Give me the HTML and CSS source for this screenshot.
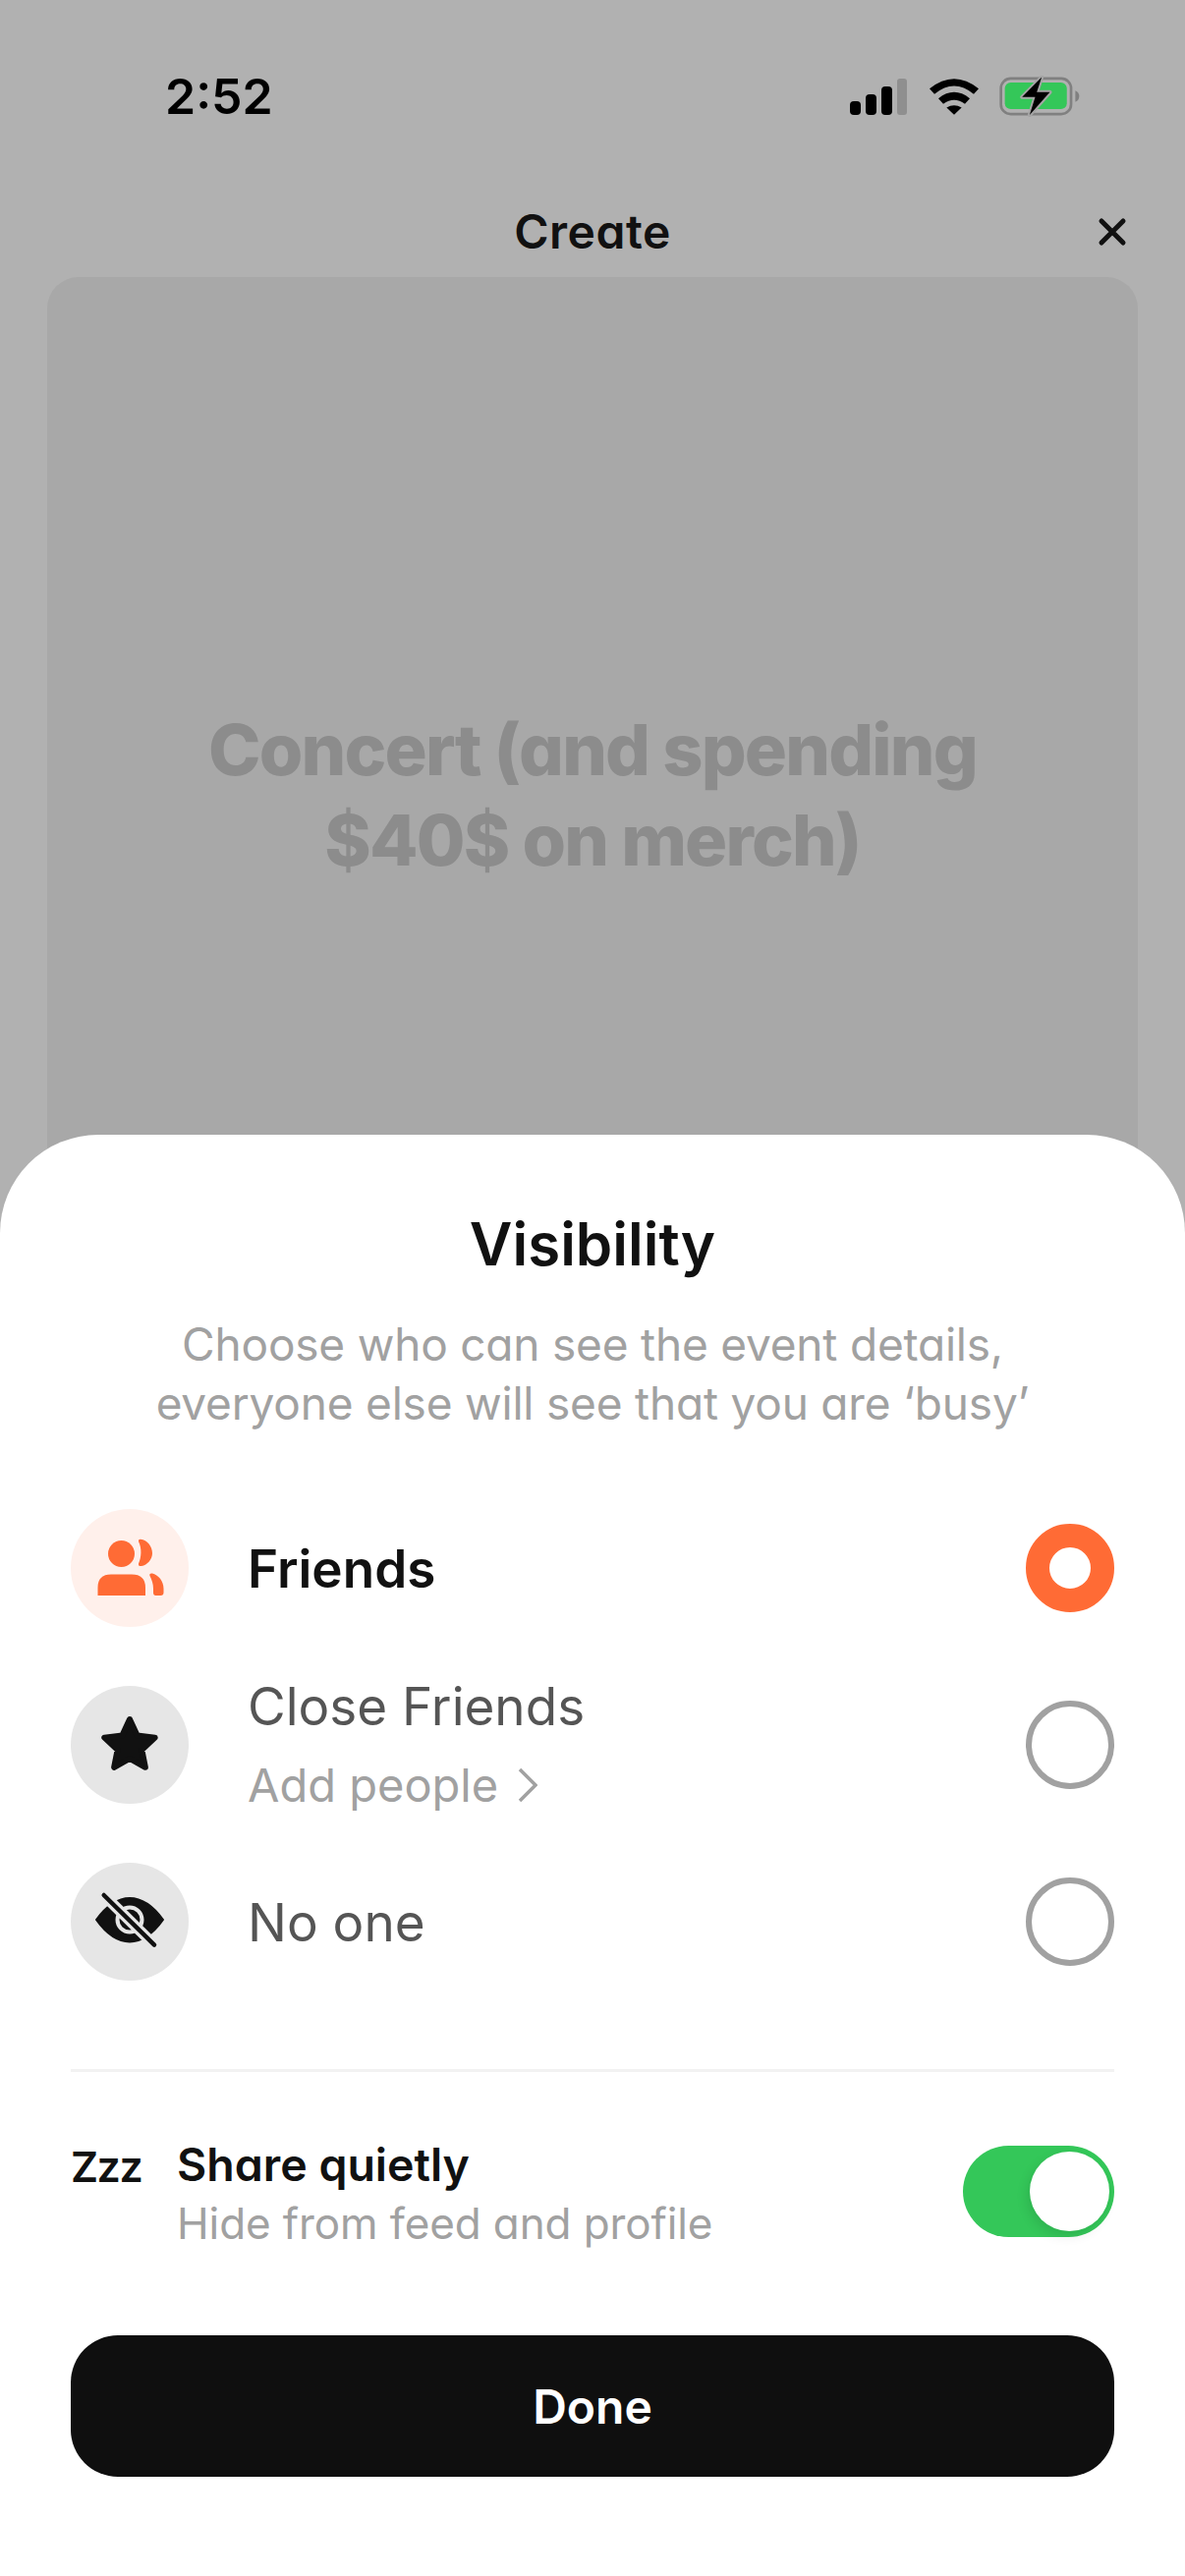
FILE: index.html
```html
<!DOCTYPE html>
<html lang="en">
<head>
    <meta charset="UTF-8">
    <meta name="viewport" content="width=device-width, initial-scale=1.0">
    <title>Visibility</title>
    <link rel="stylesheet" href="styles.css">
</head>
<body>
    <div class="screen">
        <div class="status-bar">
            <span class="status-time">2:52</span>
            <div class="status-icons">
                <svg class="icon-signal" width="58" height="37" viewBox="0 0 58 37">
                    <rect x="0" y="23" width="11" height="14" rx="4" fill="#000"/>
                    <rect x="16" y="16" width="11" height="21" rx="4" fill="#000"/>
                    <rect x="32" y="8" width="11" height="29" rx="4" fill="#000"/>
                    <rect x="48" y="0" width="10" height="37" rx="3" fill="#8f8f8f"/>
                </svg>
                <svg class="icon-wifi" width="50" height="37" viewBox="0 0 150 110">
                    <path d="M0 30 Q75 -30 150 30 L135 47 Q75 -3 15 47Z" fill="#000"/>
                    <path d="M27 60 Q75 22 123 60 L108 77 Q75 52 42 77Z" fill="#000"/>
                    <path d="M52 88 Q75 74 98 88 L75 110Z" fill="#000"/>
                </svg>
                <svg class="icon-battery" width="83" height="42" viewBox="535 50 250 125">
                    <rect x="540" y="58" width="215" height="109" rx="30" fill="none" stroke="#808080" stroke-width="8"/>
                    <rect x="552" y="70" width="190" height="82" rx="18" fill="#34c759"/>
                    <path d="M768 95 Q780 100 780 112 Q780 125 768 130Z" fill="#808080"/>
                    <path d="M665 54 L605 115 L645 115 L628 170 L690 100 L650 100Z" fill="#000" stroke="#a4a4a4" stroke-width="12" paint-order="stroke" stroke-linejoin="round"/>
                </svg>
            </div>
        </div>

        <div class="top-bar">
            <span class="top-title">Create</span>
            <svg class="icon-close" width="30" height="30" viewBox="0 0 30 30">
                <path d="M4 4 L26 26 M26 4 L4 26" stroke="#111" stroke-width="5" stroke-linecap="round"/>
            </svg>
        </div>

        <div class="event-card">
            <p class="event-name">Concert (and spending<br>$40$ on merch)</p>
        </div>

        <div class="sheet">
            <h1 class="sheet-title">Visibility</h1>
            <p class="sheet-text">Choose who can see the event details,<br>everyone else will see that you are ‘busy’</p>

            <div class="options">
                <div class="option">
                    <div class="option-icon option-icon-active">
                        <svg width="90" height="84" viewBox="-3 0 90 84">
                            <circle cx="33.5" cy="27.5" r="13.5" fill="#ff6b35"/>
                            <path d="M9.5 70 V62 Q9.5 48.5 23 48.5 H44 Q58 48.5 58 62 V70Z" fill="#ff6b35"/>
                            <path d="M51 15 Q50.5 12.5 53 12.7 C60 13.5 65 20 65 27 C65 33 60 39 54 40 Q50.5 40.5 51 37.5 C54 31 54.5 22 51 15Z" fill="#ff6b35"/>
                            <path d="M62.5 50 Q61.5 47 65 47.5 C71 49 76.5 55 76.5 63 V67 Q76.5 70 73.5 70 H68.5 Q66 70 66 67 V63 C66 58 64.5 54 62.5 50Z" fill="#ff6b35"/>
                        </svg>
                    </div>
                    <div class="option-text">
                        <span class="option-label option-label-active">Friends</span>
                    </div>
                    <div class="radio radio-active"></div>
                </div>
                <div class="option">
                    <div class="option-icon">
                        <svg width="60" height="60" viewBox="0 0 60 60">
                            <path d="M30 4 L37.64 20.48 L55.68 22.66 L42.36 35.02 L45.87 52.84 L30 44 L14.13 52.84 L17.64 35.02 L4.32 22.66 L22.36 20.48Z" fill="#111" stroke="#111" stroke-width="6" stroke-linejoin="round"/>
                        </svg>
                    </div>
                    <div class="option-text">
                        <span class="option-label">Close Friends</span>
                        <span class="option-sub">Add people
                            <svg class="icon-chevron" width="20" height="36" viewBox="0 0 20 36">
                                <path d="M2 2 L18 18 L2 34" fill="none" stroke="#a1a1a1" stroke-width="3.5"/>
                            </svg>
                        </span>
                    </div>
                    <div class="radio"></div>
                </div>
                <div class="option">
                    <div class="option-icon">
                        <svg width="90" height="84" viewBox="-3 0 90 84">
                            <path d="M8 40 Q24 18 42 18 Q60 18 76 40 Q60 62.5 42 62.5 Q24 62.5 8 40Z" fill="#111" stroke="#111" stroke-width="2" stroke-linejoin="round"/>
                            <circle cx="42" cy="40" r="12.5" fill="#111" stroke="#e6e6e6" stroke-width="4"/>
                            <path d="M15.7 15 L67 65.7" stroke="#e6e6e6" stroke-width="11"/>
                            <path d="M15.7 15 L67 65.7" stroke="#111" stroke-width="4.5" stroke-linecap="round"/>
                        </svg>
                    </div>
                    <div class="option-text">
                        <span class="option-label">No one</span>
                    </div>
                    <div class="radio"></div>
                </div>
            </div>

            <div class="divider"></div>

            <div class="quiet-row">
                <span class="quiet-zzz">Zzz</span>
                <div class="quiet-text">
                    <span class="quiet-title">Share quietly</span>
                    <span class="quiet-sub">Hide from feed and profile</span>
                </div>
                <div class="toggle"><div class="toggle-knob"></div></div>
            </div>

            <button class="done-btn">Done</button>
        </div>
    </div>
</body>
</html>
```

FILE: styles.css
```css
* {
    box-sizing: border-box;
}
body {
    margin: 0;
    font-family: Inter, "Noto Sans", sans-serif;
    font-feature-settings: "cv11";
}
.screen {
    position: relative;
    width: 1206px;
    height: 2622px;
    overflow: hidden;
    background-color: #b1b1b1;
    color: #111;
}

/* barra de estado */
.status-bar {
    display: flex;
    align-items: center;
    justify-content: space-between;
    height: 78px;
    margin-top: 59px;
    padding: 0 106px 0 168px;
}
.status-time {
    font-size: 50px;
    font-weight: 600;
    color: #000;
    font-feature-settings: normal;
}
.status-icons {
    display: flex;
    align-items: center;
    gap: 23px;
}
.icon-battery {
    margin-left: -2px;
}

.top-bar {
    position: relative;
    display: flex;
    align-items: center;
    justify-content: center;
    height: 100px;
    margin-top: 48px;
}
.top-title {
    font-size: 48px;
    font-weight: 600;
    letter-spacing: 0.5px;
}
.icon-close {
    position: absolute;
    right: 59px;
    top: 36px;
}

.event-card {
    display: flex;
    align-items: center;
    justify-content: center;
    width: 1110px;
    height: 1054px;
    margin: -3px auto 0;
    border-radius: 32px;
    background-color: #a8a8a8;
}
.event-name {
    margin: 0;
    font-size: 72px;
    font-weight: 800;
    line-height: 92px;
    letter-spacing: -1.8px;
    text-align: center;
    color: #8c8c8c;
}

/* hoja inferior */
.sheet {
    position: absolute;
    left: 0;
    right: 0;
    bottom: 0;
    height: 1467px;
    padding: 75px 72px 0;
    border-radius: 100px 100px 0 0;
    background-color: #fff;
}
.sheet-title {
    margin: 0;
    font-size: 60px;
    font-weight: 600;
    line-height: 72px;
    text-align: center;
}
.sheet-text {
    margin: 36px 0 0;
    font-size: 46px;
    line-height: 60px;
    letter-spacing: -0.2px;
    text-align: center;
    color: #a1a1a1;
}

.options {
    display: flex;
    flex-direction: column;
    gap: 60px;
    margin-top: 78px;
}
.option {
    display: flex;
    align-items: center;
    height: 120px;
}
.option-icon {
    display: flex;
    align-items: center;
    justify-content: center;
    flex-shrink: 0;
    width: 120px;
    height: 120px;
    border-radius: 50%;
    background-color: #e6e6e6;
}
.option-icon-active {
    background-color: #fff0eb;
}
.option-text {
    display: flex;
    flex-direction: column;
    margin: 2px 0 0 60px;
}
.option-label {
    font-size: 53px;
    line-height: 62px;
    color: #555;
}
.option-label-active {
    font-weight: 600;
    color: #111;
}
.option-sub {
    display: flex;
    align-items: center;
    margin-top: 18px;
    font-size: 47px;
    line-height: 62px;
    color: #a1a1a1;
}
.icon-chevron {
    margin-left: 20px;
}
.radio {
    width: 90px;
    height: 90px;
    margin-left: auto;
    border: 6px solid #a1a1a1;
    border-radius: 50%;
}
.radio-active {
    border: 24px solid #ff6b35;
}

.divider {
    height: 3px;
    margin-top: 90px;
    background-color: #f2f2f2;
}

.quiet-row {
    display: flex;
    align-items: center;
    margin-top: 65px;
}
.quiet-zzz {
    flex-shrink: 0;
    align-self: flex-start;
    width: 108px;
    margin-top: 1px;
    font-size: 43px;
    font-weight: 600;
    line-height: 60px;
    letter-spacing: -1.5px;
}
.quiet-text {
    display: flex;
    flex-direction: column;
}
.quiet-title {
    margin-top: -1px;
    font-size: 46.5px;
    font-weight: 600;
    line-height: 60px;
}
.quiet-sub {
    font-size: 44px;
    line-height: 60px;
    letter-spacing: -0.1px;
    color: #a1a1a1;
}
.toggle {
    display: flex;
    align-items: center;
    justify-content: flex-end;
    width: 154px;
    height: 93px;
    margin-left: auto;
    margin-bottom: 6px;
    padding-right: 5px;
    border-radius: 47px;
    background-color: #34c759;
}
.toggle-knob {
    width: 81px;
    height: 81px;
    border-radius: 50%;
    background-color: #fff;
    box-shadow: -3px 5px 12px rgba(0, 0, 0, 0.1);
}

.done-btn {
    display: block;
    width: 100%;
    height: 144px;
    margin-top: 84px;
    border: none;
    border-radius: 48px;
    background-color: #0f0f0f;
    color: #fff;
    font-family: inherit;
    font-feature-settings: inherit;
    font-size: 48px;
    font-weight: 600;
}
```
